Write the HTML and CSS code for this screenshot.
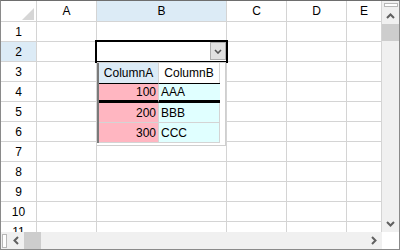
FILE: index.html
```html
<!DOCTYPE html>
<html lang="en">
<head>
    <meta charset="UTF-8">
    <title>Grid Combo Cell</title>
    <link rel="stylesheet" href="styles.css">
</head>
<body>
    <div class="sheet">
        <div class="main">
            <div class="grid">
                <div class="corner">
                    <svg width="12" height="12" viewBox="0 0 12 12"><polygon points="12,0 12,12 0,12" fill="#d6d6d6"/></svg>
                </div>
                <div class="colhead">A</div>
                <div class="colhead sel">B</div>
                <div class="colhead">C</div>
                <div class="colhead">D</div>
                <div class="colhead">E</div>

                <div class="rowhead">1</div><div class="cell"></div><div class="cell"></div><div class="cell"></div><div class="cell"></div><div class="cell"></div>
                <div class="rowhead sel">2</div><div class="cell"></div><div class="cell"></div><div class="cell"></div><div class="cell"></div><div class="cell"></div>
                <div class="rowhead">3</div><div class="cell"></div><div class="cell"></div><div class="cell"></div><div class="cell"></div><div class="cell"></div>
                <div class="rowhead">4</div><div class="cell"></div><div class="cell"></div><div class="cell"></div><div class="cell"></div><div class="cell"></div>
                <div class="rowhead">5</div><div class="cell"></div><div class="cell"></div><div class="cell"></div><div class="cell"></div><div class="cell"></div>
                <div class="rowhead">6</div><div class="cell"></div><div class="cell"></div><div class="cell"></div><div class="cell"></div><div class="cell"></div>
                <div class="rowhead">7</div><div class="cell"></div><div class="cell"></div><div class="cell"></div><div class="cell"></div><div class="cell"></div>
                <div class="rowhead">8</div><div class="cell"></div><div class="cell"></div><div class="cell"></div><div class="cell"></div><div class="cell"></div>
                <div class="rowhead">9</div><div class="cell"></div><div class="cell"></div><div class="cell"></div><div class="cell"></div><div class="cell"></div>
                <div class="rowhead">10</div><div class="cell"></div><div class="cell"></div><div class="cell"></div><div class="cell"></div><div class="cell"></div>
                <div class="rowhead">11</div><div class="cell"></div><div class="cell"></div><div class="cell"></div><div class="cell"></div><div class="cell"></div>
            </div>
            <div class="vscroll">
                <div class="split-v"></div>
                <div class="arrow">
                    <svg width="9" height="6" viewBox="0 0 9 6"><polyline points="1,5 4.5,1.5 8,5" fill="none" stroke="#606060" stroke-width="2"/></svg>
                </div>
                <div class="thumb-v"></div>
                <div class="track"></div>
                <div class="arrow">
                    <svg width="9" height="6" viewBox="0 0 9 6"><polyline points="1,1 4.5,4.5 8,1" fill="none" stroke="#606060" stroke-width="2"/></svg>
                </div>
            </div>
        </div>
        <div class="hbar">
            <div class="hscroll">
                <div class="split-h"></div>
                <div class="arrow-h">
                    <svg width="6" height="9" viewBox="0 0 6 9"><polyline points="5,1 1.5,4.5 5,8" fill="none" stroke="#606060" stroke-width="2"/></svg>
                </div>
                <div class="thumb-h"></div>
                <div class="track"></div>
                <div class="arrow-h">
                    <svg width="6" height="9" viewBox="0 0 6 9"><polyline points="1,1 4.5,4.5 1,8" fill="none" stroke="#606060" stroke-width="2"/></svg>
                </div>
            </div>
            <div class="box"></div>
        </div>

        <!-- combo editor on B2 -->
        <div class="editor">
            <div class="dropbtn">
                <svg width="8" height="5" viewBox="0 0 8 5"><polyline points="1,1 4,4 7,1" fill="none" stroke="#555" stroke-width="1.6"/></svg>
            </div>
        </div>

        <!-- dropdown list -->
        <div class="popup">
            <div class="list">
                <div class="lhead sel">ColumnA</div>
                <div class="lhead">ColumnB</div>
                <div class="lcell num cur">100</div>
                <div class="lcell txt cur">AAA</div>
                <div class="lcell num">200</div>
                <div class="lcell txt">BBB</div>
                <div class="lcell num">300</div>
                <div class="lcell txt">CCC</div>
            </div>
        </div>
    </div>
</body>
</html>
```

FILE: styles.css
```css
body {
    margin: 0;
    font-family: "Liberation Sans", Arial, sans-serif;
    font-size: 12px;
    color: #000;
}
.sheet {
    position: relative;
    width: 400px;
    height: 250px;
    box-sizing: border-box;
    border: 1px solid #8a8a8a;
    border-top: 1px solid #6e6e6e;
    display: flex;
    flex-direction: column;
    background: #fff;
    overflow: hidden;
}
.main {
    display: flex;
    height: 231px;
}
.grid {
    flex: 1;
    display: grid;
    grid-template-columns: 36px 60px 130px 60px 60px 1fr;
    grid-template-rows: 21px repeat(11, 20px);
    overflow: hidden;
}
.grid > div {
    box-sizing: border-box;
    border-right: 1px solid #d4d4d4;
    border-bottom: 1px solid #d4d4d4;
}
.corner {
    display: flex;
    align-items: flex-end;
    justify-content: flex-end;
    padding: 0 2px 1px 0;
}
.colhead, .rowhead {
    display: flex;
    align-items: center;
    justify-content: center;
}
.colhead.sel, .rowhead.sel {
    background: #dcebf6;
}
.vscroll {
    width: 17px;
    background: #f0f0f0;
    display: flex;
    flex-direction: column;
    align-items: center;
}
.split-v {
    width: 14px;
    height: 4px;
    margin-top: 2px;
    box-sizing: border-box;
    border: 1px solid #b8b8b8;
    background: #fff;
}
.arrow {
    height: 17px;
    display: flex;
    align-items: center;
    justify-content: center;
}
.thumb-v {
    width: 17px;
    height: 17px;
    background: #cdcdcd;
}
.track {
    flex: 1;
}
.hbar {
    display: flex;
    height: 17px;
}
.hscroll {
    flex: 1;
    display: flex;
    background: #f0f0f0;
    align-items: center;
}
.split-h {
    width: 5px;
    height: 14px;
    margin-left: 1px;
    box-sizing: border-box;
    border: 1px solid #b8b8b8;
    background: #fff;
}
.arrow-h {
    width: 17px;
    height: 17px;
    display: flex;
    align-items: center;
    justify-content: center;
}
.thumb-h {
    width: 17px;
    height: 17px;
    background: #cdcdcd;
}
.box {
    width: 17px;
    background: #fff;
}
.editor {
    position: absolute;
    left: 94px;
    top: 39px;
    width: 133px;
    height: 23px;
    box-sizing: border-box;
    border: 2px solid #000;
    background: #fff;
    display: flex;
    justify-content: flex-end;
    align-items: flex-start;
}
.dropbtn {
    width: 16px;
    height: 18px;
    box-sizing: border-box;
    border: 1px solid #adadad;
    background: #e1e1e1;
    display: flex;
    align-items: center;
    justify-content: center;
}
.popup {
    position: absolute;
    left: 96px;
    top: 61px;
    width: 129px;
    height: 84px;
    box-sizing: border-box;
    background: #fff;
    border-top: 1px solid #cfcfcf;
    border-right: 1px solid #cfcfcf;
    border-bottom: 1px solid #cfcfcf;
}
.list {
    display: grid;
    grid-template-columns: 60px 61px;
    grid-template-rows: 20px 20px 20px 20px;
    width: 123px;
    box-sizing: border-box;
    border-left: 2px solid #7a7a7a;
}
.list > div {
    box-sizing: border-box;
    border-right: 1px solid #d4d4d4;
    border-bottom: 1px solid #d4d4d4;
    display: flex;
    align-items: center;
}
.lhead {
    justify-content: center;
}
.list > .lhead {
    border-bottom: none;
}
.lhead.sel {
    background: #dcebf6;
}
.num {
    background: #ffb6c1;
    justify-content: flex-end;
    padding-right: 2px;
}
.txt {
    background: #e0ffff;
    padding-left: 2px;
}
.list > .cur {
    border-top: 1px solid #000;
    border-bottom: 3px solid #000;
    border-right: none;
}
.list > .num.cur {
    border-right: 1px solid #d4d4d4;
}
```
